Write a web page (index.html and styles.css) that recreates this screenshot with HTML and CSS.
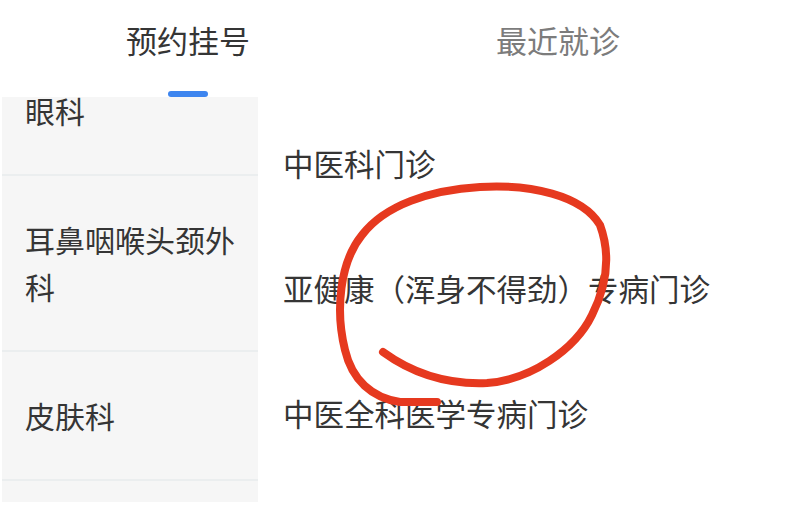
FILE: index.html
```html
<!DOCTYPE html>
<html lang="zh-CN">
<head>
<meta charset="utf-8">
<link rel="stylesheet" href="styles.css">
</head>
<body>
<div class="page">
  <header class="tabs">
    <div class="tab active">
      <span class="tab-label">预约挂号</span>
      <span class="tab-bar"></span>
    </div>
    <div class="tab">
      <span class="tab-label">最近就诊</span>
      <span class="tab-bar hidden"></span>
    </div>
  </header>
  <main class="content">
    <nav class="side">
      <div class="side-scroll">
        <div class="side-item">眼科</div>
        <div class="side-item">耳鼻咽喉头颈外科</div>
        <div class="side-item">皮肤科</div>
        <div class="side-item"></div>
      </div>
    </nav>
    <section class="list">
      <div class="list-item">中医科门诊</div>
      <div class="list-item">亚健康（浑身不得劲）专病门诊</div>
      <div class="list-item">中医全科医学专病门诊</div>
    </section>
  </main>
  <svg class="mark" width="809" height="515" viewBox="0 0 809 515">
    <path d="M383,352 C405,368 440,385 487,383 C530,380 575,350 592,315 C607,285 611,255 600,225 C582,195 530,184 480,187 C430,190 385,205 362,235 C340,262 335,310 345,350 C352,380 372,398 400,402 L437,402" fill="none" stroke="#e6391f" stroke-width="8" stroke-linecap="round" stroke-linejoin="round"/>
  </svg>
</div>
</body>
</html>
```

FILE: styles.css
```css
* { box-sizing: border-box; }
html, body {
  margin: 0;
  padding: 0;
  background: #ffffff;
}
body {
  font-family: "Noto Sans CJK SC", "Noto Sans", sans-serif;
  color: #353535;
}
.page {
  position: relative;
  width: 809px;
  height: 515px;
  overflow: hidden;
}
.tabs {
  display: flex;
  padding-left: 3px;
  height: 97px;
}
.tab {
  width: 370px;
  display: flex;
  flex-direction: column;
  align-items: center;
}
.tab-label {
  margin-top: 20px;
  font-size: 31px;
  line-height: 40px;
  color: #7c7c7c;
}
.tab.active .tab-label {
  color: #353535;
}
.tab-bar {
  margin-top: 31px;
  width: 40px;
  height: 6px;
  border-radius: 3px;
  background: #3d85ef;
}
.tab-bar.hidden { visibility: hidden; }
.content {
  display: flex;
  height: 418px;
}
.side {
  margin-left: 2px;
  width: 256px;
  height: 405px;
  background: #f6f6f6;
  overflow: hidden;
}
.side-scroll {
  margin-top: -50px;
}
.side-item {
  padding: 40px 23px;
  font-size: 30px;
  line-height: 47px;
  border-bottom: 2px solid #ebeeef;
  min-height: 129px;
}
.list {
  flex: 1;
  padding-left: 25px;
  padding-top: 3px;
}
.list-item {
  height: 125px;
  display: flex;
  align-items: center;
  font-size: 30.5px;
  color: #353535;
  white-space: nowrap;
}
.mark {
  position: absolute;
  left: 0;
  top: 0;
  pointer-events: none;
}
```
